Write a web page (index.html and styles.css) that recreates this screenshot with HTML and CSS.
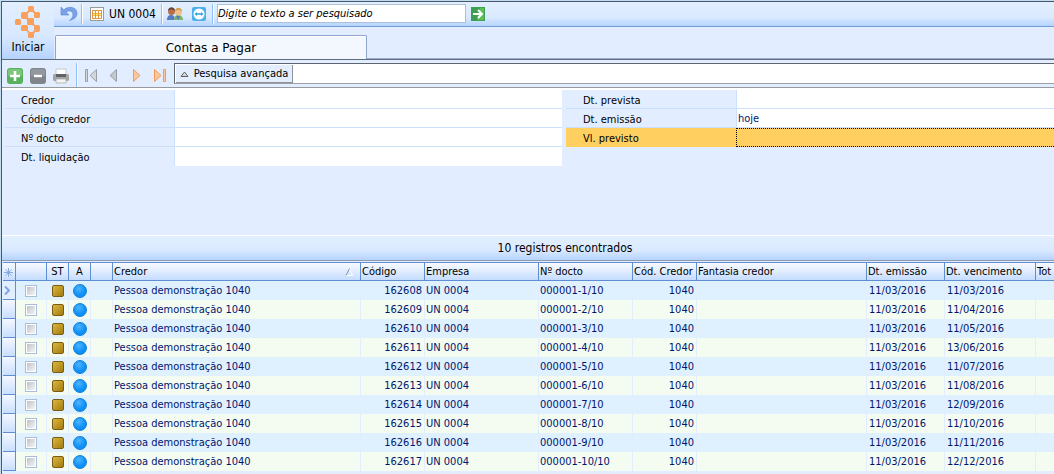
FILE: index.html
```html
<!DOCTYPE html>
<html lang="pt-BR">
<head>
<meta charset="utf-8">
<title>Contas a Pagar</title>
<link rel="stylesheet" href="styles.css">
</head>
<body>
<div class="window">
  <header class="top">
    <button class="start" type="button">
      <svg class="logo" width="26" height="32" viewBox="0 0 26 32" aria-hidden="true">
        <g fill="#f9a05d">
          <rect x="13" y="0" width="6" height="6" rx="1.500"/>
          <rect x="6" y="6" width="7" height="7" rx="2"/>
          <rect x="19" y="6" width="6" height="6" rx="1.500"/>
          <path d="M11.500 11q1.500 1 2.500 1h4q1 0 1 1v4q0 1.500 1.500 3h-2q-1-1-2.500-1h-3q-1 0-1-1v-4q0-1-1.500-2z"/>
          <rect x="0" y="13" width="6" height="6" rx="1.500"/>
          <rect x="19" y="19" width="6" height="7" rx="2"/>
          <rect x="6" y="19" width="7" height="6" rx="1.500"/>
          <rect x="13" y="26" width="6" height="6" rx="1.500"/>
          <path d="M12 5h2v2h-2zM18 5h2v2h-2zM12 24.500h2v2h-2zM18 25h2v2h-2z"/>
        </g>
      </svg>
      <span>Iniciar</span>
    </button>
    <div class="top-main">
      <div class="quickbar">
        <button class="icon-btn undo" type="button" aria-label="Desfazer">
          <svg width="18" height="18" viewBox="0 0 18 18"><path d="M1 2v8h8L6 7.200C8.500 5 12.500 5.500 13 9c.3 3-1.500 5-3.500 6.500C14 14.500 17 12 17 8.500 17 2 9 .5 3.800 4.800z" fill="#7ba2e8" stroke="#5b86d8" stroke-width=".6"/></svg>
        </button>
        <span class="sep"></span>
        <button class="unit" type="button">
          <svg width="14" height="14" viewBox="0 0 14 14"><rect x=".5" y=".5" width="13" height="13" fill="#fff" stroke="#9a9a9a"/><rect x="2" y="3" width="10" height="9" fill="#e8963c"/><path d="M3 4h2v2H3zM6 4h2v2H6zM9 4h2v2H9zM3 9h2v2H3zM6 9h2v2H6zM9 9h2v2H9z" fill="#fff"/><path d="M3 6.500h2v2H3zM6 6.500h2v2H6zM9 6.500h2v2H9z" fill="#ffe95a"/></svg>
          <span>UN 0004</span>
        </button>
        <span class="sep"></span>
        <button class="icon-btn people" type="button" aria-label="Usuários">
          <svg width="16" height="14" viewBox="0 0 16 14"><path d="M0 13c0-4 2-5 4-5s4 1 4 5z" fill="#5878c8"/><circle cx="4.500" cy="4.500" r="3.500" fill="#b86f48"/><path d="M1 4c0-5 7-5 7 0-2-2-5-2-7 0z" fill="#65463a"/><path d="M7 13c0-4 2-5 4-5s5 1 5 5z" fill="#79b668"/><path d="M9 9l2.500 4L13 9z" fill="#5878c8"/><circle cx="11.500" cy="5" r="3.500" fill="#f2c08c"/><path d="M8 4.500c0-5 7-5 7 0-2-2-5-2-7 0z" fill="#d6a04a"/></svg>
        </button>
        <button class="icon-btn remote" type="button" aria-label="Acesso remoto">
          <svg width="14" height="14" viewBox="0 0 14 14"><rect width="14" height="14" rx="2" fill="#4eb0ea"/><circle cx="7" cy="7" r="5.500" fill="#fff"/><path d="M2.500 7L5 5v1.300h4V5l2.500 2L9 9V7.700H5V9z" fill="#2f9fe0"/></svg>
        </button>
        <span class="sep"></span>
        <input class="search" type="text" aria-label="Pesquisa" placeholder="Digite o texto a ser pesquisado">
        <button class="icon-btn go" type="button" aria-label="Pesquisar">
          <svg width="14" height="14" viewBox="0 0 14 14"><rect width="14" height="14" fill="#3f9f50"/><path d="M9 1h4v12H6z" fill="#5dbd57"/><path d="M2 7h9M7 3l4 4-4 4" fill="none" stroke="#fff" stroke-width="2"/></svg>
        </button>
      </div>
      <nav class="tabs"><button class="tab" type="button">Contas a Pagar</button><span class="tab-line"></span></nav>
    </div>
  </header>

  <div class="toolbar">
    <div class="tools">
      <button class="icon-btn" type="button" aria-label="Incluir"><svg width="16" height="16" viewBox="0 0 16 16"><rect width="16" height="16" rx="3" fill="#58b15d"/><path d="M1 3q0-2 2-2h10q2 0 2 2v5H1z" fill="#7bc67c"/><path d="M8 3v10M3 8h10" stroke="#fff" stroke-width="2.600"/></svg></button>
      <button class="icon-btn" type="button" aria-label="Excluir"><svg width="16" height="16" viewBox="0 0 16 16"><rect width="16" height="16" rx="3" fill="#7f858b"/><path d="M1 3q0-2 2-2h10q2 0 2 2v5H1z" fill="#92989d"/><path d="M4 8h8" stroke="#fff" stroke-width="2.400"/></svg></button>
      <button class="icon-btn" type="button" aria-label="Imprimir"><svg width="16" height="16" viewBox="0 0 16 16"><path d="M3 1h10v6H3z" fill="#fff" stroke="#bbb" stroke-width=".8"/><rect y="6" width="16" height="7" rx="1.500" fill="#a3a4a6"/><path d="M3 6h10v3H3z" fill="#606266"/><path d="M3 11h10v4H3z" fill="#f4f4f4" stroke="#aaa" stroke-width=".8"/></svg></button>
    </div>
    <span class="sep"></span>
    <div class="nav">
      <button class="icon-btn" type="button" aria-label="Primeiro"><svg width="12" height="13" viewBox="0 0 12 13"><path d="M.5.5h2v12h-2zM11.500.5v12L5 6.500z" fill="#d2d5da" stroke="#9a9fa6"/></svg></button>
      <button class="icon-btn" type="button" aria-label="Anterior"><svg width="12" height="13" viewBox="0 0 12 13"><path d="M8.500.5v12L2 6.500z" fill="#c4c7cb" stroke="#9a9fa6"/></svg></button>
      <button class="icon-btn" type="button" aria-label="Próximo"><svg width="12" height="13" viewBox="0 0 12 13"><path d="M2.500.5v12L9 6.500z" fill="#fbc79c" stroke="#f3995a"/></svg></button>
      <button class="icon-btn" type="button" aria-label="Último"><svg width="12" height="13" viewBox="0 0 12 13"><path d="M9.500.5h2v12h-2zM.5.5v12L7 6.500z" fill="#fbc79c" stroke="#f3995a"/></svg></button>
    </div>
    <div class="adv-box">
      <button class="adv" type="button"><svg width="9" height="6" viewBox="0 0 9 6"><path d="M1 5.500L4.500 1 8 5.500z" fill="#d8d8d8" stroke="#606060"/></svg><span>Pesquisa avançada</span></button>
    </div>
  </div>

  <form class="filters">
    <div class="fcol left">
      <div class="frow"><label for="f1">Credor</label><input id="f1" type="text"></div>
      <div class="frow"><label for="f2">Código credor</label><input id="f2" type="text"></div>
      <div class="frow"><label for="f3">Nº docto</label><input id="f3" type="text"></div>
      <div class="frow"><label for="f4">Dt. liquidação</label><input id="f4" type="text"></div>
    </div>
    <div class="fcol right">
      <div class="frow"><label for="f5">Dt. prevista</label><input id="f5" type="text"></div>
      <div class="frow"><label for="f6">Dt. emissão</label><input id="f6" type="text" value="hoje"></div>
      <div class="frow active"><label for="f7">Vl. previsto</label><input id="f7" type="text"></div>
    </div>
  </form>

  <div class="count">10 registros encontrados</div>

  <table class="grid">
    <colgroup><col class="w-ind"><col class="w-chk"><col class="w-icon"><col class="w-icon"><col class="w-icon"><col class="w-credor"><col class="w-cod"><col class="w-emp"><col class="w-doc"><col class="w-ccred"><col class="w-fant"><col class="w-emi"><col class="w-venc"><col></colgroup>
    <thead>
      <tr>
        <th><svg width="9" height="9" viewBox="0 0 9 9"><path d="M4.500 0v9M0 4.500h9M1.500 1.500l6 6M7.500 1.500l-6 6" stroke="#7fa4dc" stroke-width=".9"/></svg></th>
        <th></th><th class="mid">ST</th><th class="mid">A</th><th></th>
        <th><span class="sorted">Credor<svg width="8" height="8" viewBox="0 0 8 8"><path d="M1 7.500h6.500L4.500.5" fill="none" stroke="#fff"/><path d="M1 7.500L4.500.5" stroke="#7f93b8"/></svg></span></th>
        <th>Código</th><th>Empresa</th><th>Nº docto</th><th>Cód. Credor</th><th>Fantasia credor</th><th>Dt. emissão</th><th>Dt. vencimento</th><th class="last">Tot</th>
      </tr>
    </thead>
    <tbody id="rows"></tbody>
  </table>
</div>
<script src="rows.js"></script>
</body>
</html>
```

FILE: rows.js
```js
const dueDates = [
  "11/03/2016", "11/04/2016", "11/05/2016", "13/06/2016", "11/07/2016",
  "11/08/2016", "12/09/2016", "11/10/2016", "11/11/2016", "12/12/2016"
];
const marker = '<svg width="7" height="9" viewBox="0 0 7 9"><path d="M1 .5l4 4-4 4" fill="none" stroke="#7ea6e6" stroke-width="2"/></svg>';

document.getElementById("rows").innerHTML = dueDates.map((due, i) => `
  <tr>
    <td class="ind">${i === 0 ? marker : ""}</td>
    <td class="mid"><input class="chk" type="checkbox" aria-label="Selecionar ${162608 + i}"></td>
    <td class="mid"><span class="status"></span></td>
    <td class="mid"><span class="ball"></span></td>
    <td></td>
    <td>Pessoa demonstração 1040</td>
    <td class="num">${162608 + i}</td>
    <td>UN 0004</td>
    <td>000001-${i + 1}/10</td>
    <td class="num">1040</td>
    <td></td>
    <td class="date">11/03/2016</td>
    <td class="date">${due}</td>
    <td class="last"></td>
  </tr>`).join("");
```

FILE: styles.css
```css
* { box-sizing: border-box; }

body {
  margin: 0;
  background: #e2eeff;
  color: #000;
  font: 11px/14px "DejaVu Sans Condensed", "DejaVu Sans", sans-serif;
}

button, input { font: inherit; color: inherit; margin: 0; }
button { border: 0; padding: 0; background: none; }
svg { display: block; flex: none; }

.window {
  min-height: 100vh;
  border: 1px solid #c3ddf0;
  border-width: 1px 0 0 1px;
  box-shadow: inset 1px 1px #46586b;
  padding: 1px 0 0 1px;
  overflow: hidden;
}

.top { display: flex; height: 58px; border-bottom: 1px solid #606a78; }

.start {
  width: 52px;
  display: flex;
  flex-direction: column;
  align-items: center;
  gap: 2px;
  padding-top: 4px;
  font-size: 12px;
  background: linear-gradient(#e3efff, #d8e8ff 60%, #b5d3ff);
}

.top-main { flex: 1; min-width: 0; }

.quickbar {
  display: flex;
  align-items: center;
  height: 25px;
  padding: 0 0 1px 3px;
  border-bottom: 1px solid #6f9edb;
  background: linear-gradient(#e3efff, #d9e9ff 65%, #b5d3ff);
}

.icon-btn { display: flex; align-items: center; justify-content: center; }
.sep { width: 2px; height: 20px; background: linear-gradient(90deg, #8fc0f8 50%, #fff 50%); }
.quickbar .undo { width: 24px; }
.unit { display: flex; align-items: center; gap: 5px; padding: 0 7px; width: 78px; font-size: 12px; white-space: nowrap; }
.quickbar .people { width: 23px; }
.quickbar .remote { width: 26px; }

.search {
  width: 249px;
  height: 19px;
  margin-left: 3px;
  padding: 0;
  border: 1px solid #abc1de;
  background: #fff;
}
.search::placeholder { color: #000; opacity: 1; font-style: italic; }
.quickbar .go { margin-left: 5px; }

.tabs { display: flex; height: 32px; padding: 8px 0 0 1px; }
.tab {
  width: 312px;
  border: 1px solid #8ea4cf;
  border-bottom: 0;
  border-radius: 2px 2px 0 0;
  background: #f3f8ff;
  box-shadow: inset 0 1px #fff;
  font-family: "DejaVu Sans", sans-serif;
  font-size: 12px;
}
.tab-line { flex: 1; border-bottom: 1px solid #9aacd2; }

.toolbar {
  display: flex;
  height: 28px;
  padding: 3px 0 0 5px;
  border-bottom: 1px solid #96999d;
}
.tools { display: flex; gap: 7px; width: 69px; }
.toolbar .icon-btn { padding-top: 1px; }
.toolbar .sep { height: 24px; }
.nav { display: flex; gap: 11px; padding-left: 7px; width: 96px; }

.adv-box {
  flex: 1;
  height: 21px;
  border: 1px solid #5f6670;
  border-right: 0;
  border-bottom-color: #9ca0a6;
  background: #fff;
  display: flex;
}
.adv {
  width: 117px;
  display: flex;
  align-items: center;
  justify-content: center;
  gap: 5px;
  margin: 1px 0 0 1px;
  background: #e2eeff;
  border-right: 1px solid #8d9299;
  border-bottom: 1px solid #8d9299;
  white-space: nowrap;
}

.filters {
  display: flex;
  gap: 4px;
  height: 148px;
  padding-left: 2px;
  border-top: 2px solid #fff;
  border-bottom: 1px solid #fff;
}
.fcol.left { flex: 558 0 0; }
.fcol.right { flex: 488 0 0; }
.frow { display: flex; height: 19px; border-bottom: 1px solid #cce0fb; }
.frow:last-child { border-bottom: 0; }
.frow label { width: 170px; padding: 4px 0 0 17px; }
.frow input {
  flex: 1;
  min-width: 0;
  padding: 1px 1px 0;
  border: 0;
  border-left: 1px solid #cce0fb;
  border-radius: 0;
  background: #fff;
  color: #00156e;
}
.frow.active { background: #ffcf60; }
.frow.active input { background: #ffcf60; border: 1px dotted #000; border-right: 0; }

.count {
  height: 25px;
  padding: 5px 0 0 74px;
  text-align: center;
  font-size: 12px;
  border-bottom: 1px solid #8f9cad;
  background: linear-gradient(#e3efff, #d9e9ff 60%, #b5d3ff);
}

.grid {
  width: calc(100% - 1px);
  margin: 1px 0 0 1px;
  table-layout: fixed;
  border-collapse: separate;
  border-spacing: 0;
}
.w-ind { width: 13px; }
.w-chk { width: 31px; }
.w-icon { width: 22px; }
.w-credor { width: 248px; }
.w-cod { width: 64px; }
.w-emp { width: 114px; }
.w-doc { width: 94px; }
.w-ccred { width: 64px; }
.w-fant { width: 170px; }
.w-emi { width: 78px; }
.w-venc { width: 91px; }

.grid th, .grid td {
  height: 19px;
  padding: 0 1px;
  overflow: hidden;
  white-space: nowrap;
  text-align: left;
  font-weight: normal;
}
.grid th {
  padding-top: 1px;
  border: solid #5f8fd2;
  border-width: 1px 1px 1px 0;
  background: linear-gradient(#f7faff, #e0ecff 50%, #c4dcff);
}
.grid td { color: #00156e; border-right: 1px solid #e2eeff; }
.grid .last { border-right: 0; padding-right: 0; }
.grid tbody tr:nth-child(odd) { background: #dff0ff; }
.grid tbody tr:nth-child(even) { background: #f4fcf2; }
.grid .ind {
  border: solid #5f8fd2;
  border-width: 0 1px 1px 0;
  background: linear-gradient(#f4f8ff, #c9dfff);
}
.grid tbody tr:first-child .ind { background: #e0eeff; }
.grid .mid { text-align: center; }
.grid .num { text-align: right; padding-right: 2px; }
.grid td.date { padding-left: 2px; }
.sorted { display: flex; justify-content: space-between; align-items: center; padding-right: 6px; }

.chk {
  appearance: none;
  display: block;
  width: 12px;
  height: 12px;
  margin: 0 auto;
  border: 1px solid #a9bddb;
  background: linear-gradient(135deg, #bfc2c8, #f5f5f5) content-box, #fff;
  padding: 1px;
}
.status {
  display: block;
  width: 12px;
  height: 12px;
  margin: 0 auto;
  border: 1px solid #7b5c12;
  border-radius: 2px;
  background: linear-gradient(135deg, #dcb83c, #a37b14);
}
.ball {
  display: block;
  width: 14px;
  height: 14px;
  margin: 0 auto;
  border: 1px solid #0b7fe0;
  border-radius: 50%;
  background: radial-gradient(circle at 40% 30%, #4db4ff, #0d8ff5 60%);
}
```
